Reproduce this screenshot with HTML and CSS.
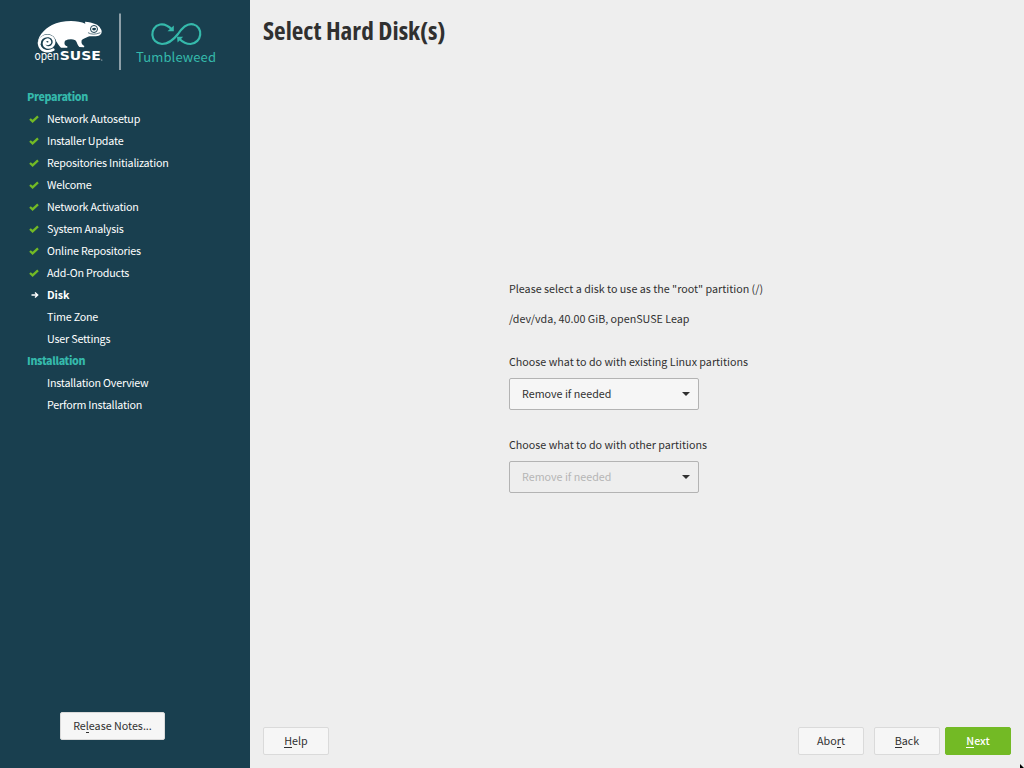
FILE: index.html
```html
<!DOCTYPE html>
<html lang="en">
<head>
<meta charset="utf-8">
<title>Select Hard Disk(s)</title>
<link rel="stylesheet" href="styles.css">
</head>
<body>
<svg class="defs" width="0" height="0" aria-hidden="true">
  <symbol id="check" viewBox="0 0 10 8"><path d="M1 4 3.6 6.400 9 1.400" fill="none" stroke="#73ba25" stroke-width="2.300"/></symbol>
  <symbol id="arrow" viewBox="0 0 8 8"><path d="M.5 4H6.5M4 1.4 6.7 4 4 6.6" fill="none" stroke="#fff" stroke-width="1.4"/></symbol>
</svg>
<div class="installer">
  <aside class="sidebar">
    <svg class="brand" viewBox="0 0 250 78">
      <g transform="translate(24 8) scale(.33333)">
        <path fill="#fff" d="M42 112C37 89 60 63 84 51C111 37 159 35 184 47L183 41C206 43 226 50 229 61C235 68 234 77 228 81C216 88 202 82 192 86C183 90 177 92 173 97C171 105 174 112 181 114L180 118L166 117C159 111 160 103 154 97C144 92 133 94 123 98C120 106 121 112 130 115L130 119L111 119C104 113 101 105 94 97C90 82 75 76 63 81C48 87 47 98 48 108Z"/>
        <circle cx="70" cy="105" r="27" fill="#193f4f"/>
        <path fill="none" stroke="#fff" stroke-width="8" stroke-linecap="round" d="M67 106C72 110 80 105 77 99C73 92 61 95 60 106C60 118 74 122 84 115C95 106 91 87 75 84C57 81 44 95 46 110C49 128 72 135 88 125"/>
        <circle cx="210" cy="63" r="10.500" fill="#fff" stroke="#193f4f" stroke-width="3"/>
        <path d="M205 61Q211 57 216 61L215 66Q209 69 205 65Z" fill="#193f4f"/>
        <path d="M192 74Q207 83 229 74" fill="none" stroke="#193f4f" stroke-width="2"/>
      </g>
      <text class="brand-open" x="34.500" y="60" textLength="24.500" lengthAdjust="spacingAndGlyphs">open</text>
      <text class="brand-suse" x="59.800" y="60.300" textLength="41" lengthAdjust="spacingAndGlyphs">SUSE</text>
      <circle cx="101.800" cy="60" r=".5" fill="#fff"/>
      <path d="M120 13.500V70" stroke="#a3b2b9" stroke-width="1.700"/>
      <path d="M172 29.500C168 25.500 164 23.700 160 24.500C149 27 150 43.500 162 44C169.500 44 174.500 38.500 178 34C182 28 187 23 193 24.300C204 27 202 43 190.500 44C186 44 182.500 42 179.500 39" fill="none" stroke="#35b9ab" stroke-width="2.200"/>
      <path d="M173.800 25.500V31.300H167.500ZM177 36.700H183.200L177.600 42.500Z" fill="#35b9ab"/>
      <text class="brand-product" x="136" y="61.500" textLength="80" lengthAdjust="spacing">Tumbleweed</text>
    </svg>
    <nav class="steps">
      <h2>Preparation</h2>
      <ul>
        <li><svg class="check"><use href="#check"/></svg><span>Network Autosetup</span></li>
        <li><svg class="check"><use href="#check"/></svg><span>Installer Update</span></li>
        <li><svg class="check"><use href="#check"/></svg><span>Repositories Initialization</span></li>
        <li><svg class="check"><use href="#check"/></svg><span>Welcome</span></li>
        <li><svg class="check"><use href="#check"/></svg><span>Network Activation</span></li>
        <li><svg class="check"><use href="#check"/></svg><span>System Analysis</span></li>
        <li><svg class="check"><use href="#check"/></svg><span>Online Repositories</span></li>
        <li><svg class="check"><use href="#check"/></svg><span>Add-On Products</span></li>
        <li class="current"><svg class="arrow"><use href="#arrow"/></svg><span>Disk</span></li>
        <li><span>Time Zone</span></li>
        <li><span>User Settings</span></li>
      </ul>
      <h2>Installation</h2>
      <ul>
        <li><span>Installation Overview</span></li>
        <li><span>Perform Installation</span></li>
      </ul>
    </nav>
    <button class="button release"><span>Re<u>l</u>ease Notes...</span></button>
  </aside>
  <main class="content">
    <h1>Select Hard Disk(s)</h1>
    <section class="form">
      <p class="prompt">Please select a disk to use as the "root" partition (/)</p>
      <p class="disk">/dev/vda, 40.00 GiB, openSUSE Leap</p>
      <label>Choose what to do with existing Linux partitions</label>
      <div class="select"><span>Remove if needed</span><svg viewBox="0 0 8 4"><path d="M0 0H8L4 4Z"/></svg></div>
      <label>Choose what to do with other partitions</label>
      <div class="select disabled"><span>Remove if needed</span><svg viewBox="0 0 8 4"><path d="M0 0H8L4 4Z"/></svg></div>
    </section>
    <footer class="actions">
      <button class="button help"><span><u>H</u>elp</span></button>
      <button class="button abort"><span>Abo<u>r</u>t</span></button>
      <button class="button back"><span><u>B</u>ack</span></button>
      <button class="button next"><span><u>N</u>ext</span></button>
    </footer>
  </main>
  <svg class="pointer" viewBox="0 0 4 4"><path d="M0 0 4 4H0Z"/></svg>
</div>
</body>
</html>
```
FILE: styles.css
```css
* { box-sizing: border-box; }
body { margin: 0; font: 10.72px/22px "Noto Sans CJK SC", "Noto Sans", sans-serif; color: #303030; }
h1, h2, p, ul { margin: 0; padding: 0; font-size: inherit; }
.defs { position: absolute; }
.installer { position: relative; display: flex; width: 1024px; height: 768px; overflow: hidden; background: #eee; }
.sidebar { display: flex; flex-direction: column; width: 250px; background: #193f4f; color: #fff; }
.brand { width: 250px; height: 78px; }
.brand-open { font: 12px "Noto Sans CJK SC", sans-serif; fill: #fff; }
.brand-suse { font: 700 12px "DejaVu Sans", sans-serif; fill: #fff; }
.brand-product { font: 13px "Noto Sans CJK SC", sans-serif; fill: #35b9ab; }
.steps { padding: 8px 0 0 27px; letter-spacing: -.2px; }
.steps h2 { height: 22px; font-weight: 900; color: #35b9ab; letter-spacing: -.36px; }
.steps ul { list-style: none; }
.steps li { position: relative; height: 22px; padding-left: 20px; }
.steps li span { display: block; white-space: nowrap; }
.check { position: absolute; left: 2px; top: 7px; width: 10px; height: 8px; }
.arrow { position: absolute; left: 4px; top: 7px; width: 8px; height: 8px; }
.current { font-weight: 700; letter-spacing: -.1px; }
.button { display: flex; align-items: center; justify-content: center; height: 28px; width: 66px; padding: 0; font: inherit; line-height: 20px; color: #303030; background: #f6f6f6; border: 1px solid #dadada; border-radius: 2px; }
.button u { text-decoration: none; border-bottom: 1px solid currentColor; display: inline-block; line-height: 13px; }
.release { width: 105px; margin: auto 0 28px 60px; }
.content { display: flex; flex-direction: column; width: 774px; padding: 12px 13px 13px; }
h1 { font: 700 25.3px/36px "Open Sans", sans-serif; font-stretch: 75%; }
.form { padding: 230px 0 0 246px; }
.prompt { margin-bottom: 8px; }
.disk { margin-bottom: 21px; }
.form label { display: block; margin-bottom: 5px; }
.select { display: flex; align-items: center; justify-content: space-between; width: 190px; height: 32px; padding: 0 8px 0 12px; margin-bottom: 24px; background: #f6f6f6; border: 1px solid #b3b3b3; border-radius: 2px; }
.select svg { width: 8px; height: 4px; fill: #303030; }
.disabled { background: #eee; }
.disabled span { color: #b5b5b5; }
.actions { display: flex; margin-top: auto; }
.abort { margin-left: auto; }
.back { margin-left: 10px; }
.next { margin-left: 5px; color: #fff; background: #73ba25; border-color: #73ba25; font-weight: 500; }
.pointer { position: absolute; right: 0; bottom: 0; width: 4px; height: 4px; }
```
